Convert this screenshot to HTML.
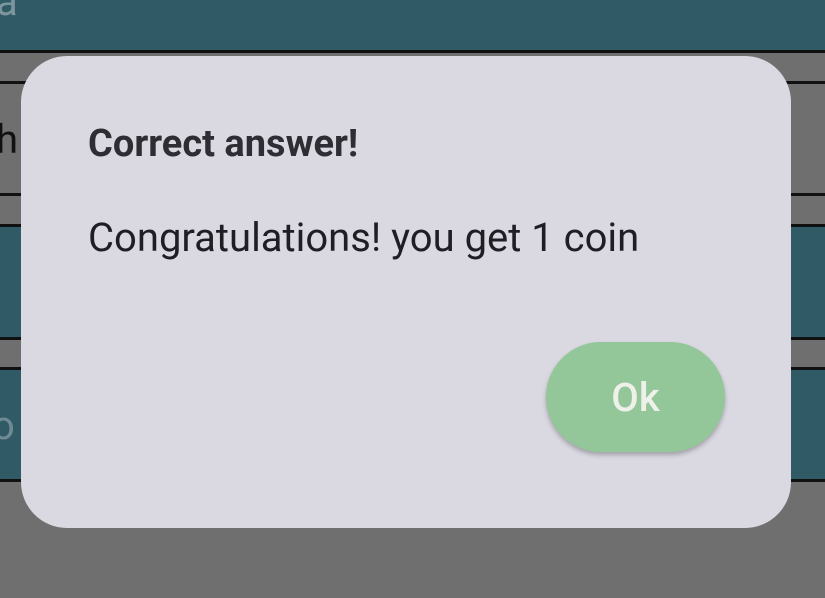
<!DOCTYPE html>
<html><head><style>
*{margin:0;padding:0;box-sizing:border-box}
body{width:825px;height:598px;overflow:hidden;background:#6f6f6f;position:relative;font-family:"Roboto","Liberation Sans",sans-serif}
.b{position:absolute;left:0;width:825px}
.teal{background:#2f5a66}
.line{background:#111;height:3px}
.dlg{position:absolute;left:21px;top:56px;width:770px;height:472px;background:#dad8e1;border-radius:46px}
.t{position:absolute;left:67px;top:66px;font-size:38px;font-weight:bold;color:#2e2d33;white-space:nowrap}
.m{position:absolute;left:67px;top:158px;font-size:40px;color:#1f1e24;white-space:nowrap}
.btn{position:absolute;left:525px;top:286px;width:179px;height:110px;border-radius:55px;background:#93c698;box-shadow:0 3px 5px rgba(0,0,0,.25);color:#eef0ea;font-size:40px;font-weight:500;text-align:center;line-height:112px}
.bg{position:absolute;font-size:40px}
</style></head><body>
<div class="b teal" style="top:0;height:51px"></div>
<div class="b line" style="top:50px"></div>
<div class="b line" style="top:81px"></div>
<div class="bg" style="left:-4px;top:-22px;color:#7d959c">a</div>
<div class="bg" style="left:-4px;top:116px;color:#111">h</div>
<div class="b line" style="top:193px"></div>
<div class="b teal" style="top:225px;height:113px"></div>
<div class="b line" style="top:224px"></div>
<div class="b line" style="top:337px"></div>
<div class="b teal" style="top:368px;height:113px"></div>
<div class="b line" style="top:367px"></div>
<div class="b line" style="top:479px"></div>
<div class="bg" style="left:-8px;top:402px;color:#6f8a92">o</div>
<div class="dlg">
<div class="t">Correct answer!</div>
<div class="m">Congratulations! you get 1 coin</div>
<div class="btn">Ok</div>
</div>
</body></html>
